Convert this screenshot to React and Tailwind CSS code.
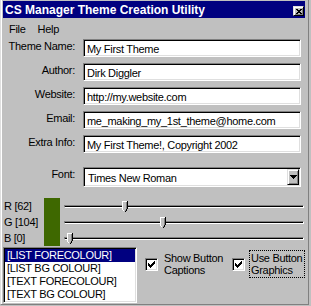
import React from "react";

const sunken =
  "border border-t-[#808080] border-l-[#808080] border-b-white border-r-white shadow-[inset_1px_1px_0_#000,inset_-1px_-1px_0_#dfdfdf]";
const raised =
  "border border-t-[#dfdfdf] border-l-[#dfdfdf] border-b-black border-r-black shadow-[inset_1px_1px_0_#fff,inset_-1px_-1px_0_#808080]";

const fields = [
  { label: "Theme Name:", value: "My First Theme" },
  { label: "Author:", value: "Dirk Diggler" },
  { label: "Website:", value: "http://my.website.com" },
  { label: "Email:", value: "me_making_my_1st_theme@home.com" },
  { label: "Extra Info:", value: "My First Theme!, Copyright 2002" },
];

const channels = [
  { label: "R [62]", value: 62 },
  { label: "G [104]", value: 104 },
  { label: "B [0]", value: 0 },
];

const listItems = [
  "[LIST FORECOLOUR]",
  "[LIST BG COLOUR]",
  "[TEXT FORECOLOUR]",
  "[TEXT BG COLOUR]",
];

function CloseGlyph() {
  return (
    <svg width="6" height="5" viewBox="0 0 6 5" shapeRendering="crispEdges">
      <path
        d="M0 0h2v1h-2zM4 0h2v1h-2zM1 1h4v1h-4zM2 2h2v1h-2zM1 3h4v1h-4zM0 4h2v1h-2zM4 4h2v1h-2z"
        fill="#000"
      />
    </svg>
  );
}

function CheckGlyph() {
  return (
    <svg width="7" height="7" viewBox="0 0 7 7" shapeRendering="crispEdges">
      <path
        d="M0 2H1V3H2V4H3V3H4V2H5V1H6V0H7V3H6V4H5V5H4V6H3V7H2V6H1V5H0Z"
        fill="#000"
      />
    </svg>
  );
}

function Thumb() {
  return (
    <svg width="6" height="11" viewBox="0 0 6 11" shapeRendering="crispEdges">
      <path d="M0 0H6V8L3 11L0 8Z" fill="#c0c0c0" />
      <path d="M0 0h5v1H1v8H0zM1 9h1v1H1z" fill="#fff" />
      <path d="M4 1h1v7h-1zM3 9h1v1h-1z" fill="#808080" />
      <path d="M5 0h1v8h-1zM4 8h1v1h-1zM3 10h1v1h-1zM4 9h1v1h-1z" fill="#000" />
    </svg>
  );
}

function Checkbox() {
  return (
    <div className={`w-[13px] h-[13px] shrink-0 bg-white flex items-center justify-center ${sunken}`}>
      <CheckGlyph />
    </div>
  );
}

export default function App() {
  return (
    <div className="w-[311px] h-[306px] bg-[#c0c0c0] text-black font-['Liberation_Sans',Arial,sans-serif]">
      <div className="w-[309px] h-[305px] border-l border-l-[#dfdfdf] border-r border-r-[#808080] border-b border-b-[#808080] overflow-hidden">
        <div className="h-full border-l border-l-white pl-[1px] pr-[3px] pt-[1px] flex flex-col">
          {/* Title bar */}
          <div className="h-[17px] bg-[#000080] flex items-start justify-between pl-[2px] pr-[1px]">
            <span className="pt-[3px] leading-[13px] text-[12px] font-bold text-white whitespace-nowrap">
              CS Manager Theme Creation Utility
            </span>
            <div className={`mt-[5px] w-[11px] h-[10px] bg-[#c0c0c0] flex items-center justify-center ${raised}`}>
              <CloseGlyph />
            </div>
          </div>

          {/* Menu */}
          <div className="h-[21px] flex pt-[5px] text-[11px] leading-[13px] tracking-[-0.3px]">
            <span className="px-[6px]">File</span>
            <span className="px-[6px]">Help</span>
          </div>

          {/* Text fields */}
          <div className="flex flex-col gap-[6px] text-[11px] tracking-[-0.3px]">
            {fields.map((f) => (
              <div key={f.label} className="flex gap-[8px]">
                <div className="w-[72px] text-right leading-[14px] whitespace-nowrap">{f.label}</div>
                <div className={`w-[218px] h-[18px] bg-white pl-[3px] pt-[3px] leading-[13px] whitespace-nowrap overflow-hidden ${sunken}`}>
                  {f.value}
                </div>
              </div>
            ))}
          </div>

          {/* Font select */}
          <div className="mt-[14px] flex gap-[8px] text-[11px] tracking-[-0.3px]">
            <div className="w-[72px] text-right leading-[14px]">Font:</div>
            <div className={`w-[218px] h-[20px] bg-white flex justify-between ${sunken}`}>
              <span className="pl-[4px] pt-[4px] leading-[13px] whitespace-nowrap">Times New Roman</span>
              <div className={`mt-[1px] mr-[1px] w-[12px] h-[16px] bg-[#c0c0c0] flex items-center justify-center ${raised}`}>
                <svg width="7" height="4" viewBox="0 0 7 4" shapeRendering="crispEdges">
                  <path d="M0 0h7v1H0zM1 1h5v1H1zM2 2h3v1H2zM3 3h1v1H3z" fill="#000" />
                </svg>
              </div>
            </div>
          </div>

          {/* Colour sliders */}
          <div className="mt-[11px] flex h-[48px] text-[11px] tracking-[-0.3px]">
            <div className="w-[41px] pl-[1px] flex flex-col">
              {channels.map((c) => (
                <div key={c.label} className="h-[16px] leading-[16px] whitespace-nowrap">
                  {c.label}
                </div>
              ))}
            </div>
            <div className="w-[16px] h-[48px] bg-[#3e6800]" />
            <div className="ml-[4px] w-[240px] flex flex-col">
              {channels.map((c) => (
                <div key={c.label} className="relative h-[16px] flex items-center">
                  <div className="w-full h-[3px] bg-black border-t border-l border-t-[#808080] border-l-[#808080] border-b border-r border-b-white border-r-white" />
                  <div
                    className="absolute top-[3px] h-[11px]"
                    style={{ left: Math.round(3 + (c.value / 255) * 228) }}
                  >
                    <Thumb />
                  </div>
                </div>
              ))}
            </div>
          </div>

          {/* List and options */}
          <div className="mt-[1px] flex items-start text-[11px] tracking-[-0.3px]">
            <div className={`w-[137px] h-[56px] bg-white px-[1px] pt-[1px] ${sunken}`}>
              {listItems.map((item, i) => (
                <div
                  key={item}
                  className={`h-[13px] leading-[13px] pl-[2px] whitespace-nowrap ${
                    i === 0 ? "bg-[#000080] text-white" : ""
                  }`}
                >
                  {item}
                </div>
              ))}
            </div>

            <div className="ml-[8px] mt-[5px] flex items-center gap-[6px]">
              <Checkbox />
              <div className="w-[63px] leading-[12px]">
                Show Button
                <br />
                Captions
              </div>
            </div>

            <div className="ml-[5px] mt-[3px] flex items-center gap-[4px]">
              <Checkbox />
              <div className="w-[56px] border border-dotted border-black pl-[1px] pt-[1px] pb-[1px] leading-[12px] whitespace-nowrap">
                Use Button
                <br />
                Graphics
              </div>
            </div>
          </div>
        </div>
      </div>
    </div>
  );
}
